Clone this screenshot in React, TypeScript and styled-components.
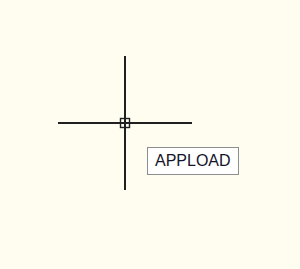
import styled, { createGlobalStyle } from "styled-components";

const GlobalStyle = createGlobalStyle`
  html, body {
    margin: 0;
    padding: 0;
    background: #fefdf0;
  }
`;

const Canvas = styled.div`
  position: relative;
  width: 300px;
  height: 269px;
  background: #fefdf0;
  overflow: hidden;
`;

const CursorLayer = styled.svg`
  position: absolute;
  left: 0;
  top: 0;
`;

const CommandTip = styled.div<{ x: number; y: number }>`
  position: absolute;
  left: ${(p) => p.x}px;
  top: ${(p) => p.y}px;
  box-sizing: border-box;
  width: 92px;
  height: 28px;
  padding: 0 0 0 7px;
  display: flex;
  align-items: center;
  background: #ffffff;
  border: 1px solid #8e8e8e;
  font-family: "Liberation Sans", Arial, sans-serif;
  font-size: 16px;
  color: #14142a;
`;

function Crosshair({ cx, cy, arm, box }: { cx: number; cy: number; arm: number; box: number }) {
  const h = box / 2;
  return (
    <CursorLayer width={300} height={269}>
      <g stroke="#202020" fill="none">
        <line x1={cx} y1={cy - arm} x2={cx} y2={cy + arm} strokeWidth={2} />
        <line x1={cx - arm} y1={cy} x2={cx + arm} y2={cy} strokeWidth={2} />
        <rect x={cx - h} y={cy - h} width={box} height={box} strokeWidth={1.4} />
      </g>
    </CursorLayer>
  );
}

export default function App() {
  return (
    <>
      <GlobalStyle />
      <Canvas>
        <Crosshair cx={125} cy={123} arm={67} box={9} />
        <CommandTip x={147} y={147}>APPLOAD</CommandTip>
      </Canvas>
    </>
  );
}
